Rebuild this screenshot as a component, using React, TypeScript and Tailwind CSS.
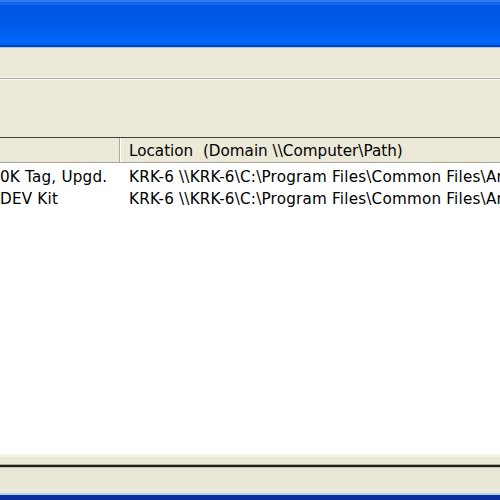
import React from "react";

export default function App() {
  const font = { fontFamily: '"DejaVu Sans", Verdana, sans-serif' };
  return (
    <div className="w-[500px] h-[500px] overflow-hidden flex flex-col bg-white" style={font}>
      {/* Title bar */}
      <div className="h-[47px] shrink-0 flex flex-col">
        <div className="h-[2px] bg-[#2a7af0]" />
        <div className="h-[3px] bg-[#1464e8]" />
        <div className="flex-1 bg-gradient-to-b from-[#0058e2] via-[#005ae6] to-[#0066fb]" />
        <div className="h-[3px] bg-[#0063f4]" />
        <div className="h-[2px] bg-[#0040b8]" />
      </div>
      <div className="h-[1px] bg-[#a9c4ee]" />
      {/* menu bar */}
      <div className="h-[29px] shrink-0 bg-[#ece9d8]" />
      <div className="h-[1px] bg-[#f7f6ef]" />
      <div className="h-[1px] bg-[#aca899]" />
      <div className="h-[1px] bg-[#ffffff]" />
      {/* toolbar */}
      <div className="h-[57px] shrink-0 bg-[#ece9d8]" />
      <div className="h-[1px] bg-[#404040]" />
      {/* list */}
      <div className="flex-1 bg-white flex flex-col text-[15.2px] text-black overflow-hidden">
        <div className="h-[25px] shrink-0 flex bg-[#ece9d8] border-b border-[#aca899]">
          <div className="w-[120px] shrink-0 border-r border-[#aca899]" />
          <div className="flex-1 pl-[8px] pt-[2px] flex items-center border-l border-white whitespace-nowrap">
            Location&nbsp; (Domain \\Computer\Path)
          </div>
        </div>
        <div className="h-[22px] shrink-0 flex items-center mt-[2px] pt-[2px] tracking-[0.2px]">
          <div className="w-[121px] shrink-0 whitespace-nowrap overflow-hidden">0K Tag, Upgd.</div>
          <div className="pl-[8px] whitespace-nowrap">KRK-6 \\KRK-6\C:\Program Files\Common Files\Ar</div>
        </div>
        <div className="h-[22px] shrink-0 flex items-center pt-[2px] tracking-[0.2px]">
          <div className="w-[121px] shrink-0 whitespace-nowrap overflow-hidden">DEV Kit</div>
          <div className="pl-[8px] whitespace-nowrap">KRK-6 \\KRK-6\C:\Program Files\Common Files\Ar</div>
        </div>
      </div>
      {/* bottom */}
      <div className="h-[3px] bg-[#f4f3ea]" />
      <div className="h-[7px] bg-[#ebe8d8]" />
      <div className="h-[1px] bg-[#aca899]" />
      <div className="h-[2px] bg-[#1e1e1a]" />
      <div className="h-[1px] bg-[#bdbab0]" />
      <div className="h-[25px] bg-gradient-to-b from-[#e8e7d6] to-[#ece8da]" />
      <div className="h-[2px] bg-[#b8d0f0]" />
      <div className="h-[5px] bg-[#0b2f9c]" />
    </div>
  );
}
